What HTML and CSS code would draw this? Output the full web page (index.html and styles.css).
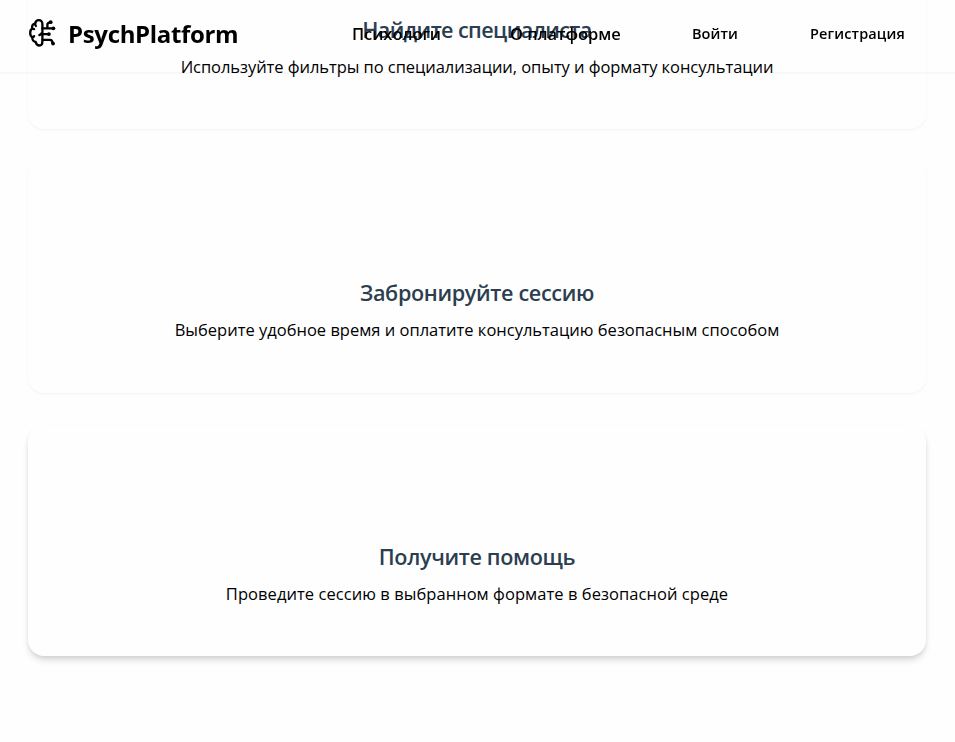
FILE: index.html
```html
<!DOCTYPE html>
<html lang="ru">
<head>
<meta charset="utf-8">
<title>PsychPlatform</title>
<link rel="stylesheet" href="styles.css">
</head>
<body>
<header class="header">
  <a class="brand">
    <svg class="logo" viewBox="0 0 28 30" fill="none" stroke="#000" stroke-width="2.3" stroke-linecap="round" stroke-linejoin="round">
      <path d="M13.4 6.2c0-2.5-1.4-4-3.5-4-2.3 0-3.5 1.5-3.7 3.5-2.4.2-3.7 2.1-2.9 4.6C1.8 11.4 1.2 13.1 1.2 15s.6 3.4 2.1 4.2c-.2 2.7 1 4.4 3.4 4.8.5 2.4 1.9 3.5 3.8 3.5 2.1 0 2.9-1.5 2.9-4z"/>
      <path d="M6.2 6c0 .9.2 1.5.7 2M3.3 10.3c.5.7 1.1.9 1.8.9M3.3 19c.8.2 1.4-.2 1.8-.9M10.4 17c1.1-.2 1.8-.9 2.2-1.8M13.4 10.3h10.4M18.4 10.3V6.8c0-1.5.9-2.3 2.3-2.5M12.5 16.1h7M13.4 21.8h7.6c1.7 0 2.6 1 2.6 3.7"/>
      <g fill="#000" stroke="none"><circle cx="21.7" cy="4.2" r="1.9"/><circle cx="24.4" cy="10.3" r="1.9"/><circle cx="19.9" cy="16.1" r="1.9"/><circle cx="24.1" cy="25.6" r="1.9"/></g>
    </svg>
    <span class="brand-name">PsychPlatform</span>
  </a>
  <nav class="nav"><a>Психологи</a><a>О платформе</a></nav>
  <div class="auth"><a class="login">Войти</a><a class="register">Регистрация</a></div>
</header>
<main class="steps">
  <section class="card find"><h3>Найдите специалиста</h3><p>Используйте фильтры по специализации, опыту и формату консультации</p></section>
  <section class="card book"><h3>Забронируйте сессию</h3><p>Выберите удобное время и оплатите консультацию безопасным способом</p></section>
  <section class="card help"><h3>Получите помощь</h3><p>Проведите сессию в выбранном формате в безопасной среде</p></section>
</main>
</body>
</html>
```
FILE: styles.css
```css
* { box-sizing: border-box; }
html, body { height: 100%; }
body {
  margin: 0;
  overflow: hidden;
  background: #fefefe;
  color: #000;
  font-family: "Open Sans", "Noto Sans", sans-serif;
}
.header {
  position: fixed;
  inset: 0 0 auto;
  z-index: 2;
  display: flex;
  align-items: center;
  height: 74px;
  padding: 0 50px 6px 28px;
  border-bottom: 2px solid rgba(0, 0, 0, .025);
  white-space: nowrap;
}
.brand { display: flex; align-items: center; width: 324px; }
.logo { width: 28px; height: 30px; margin: 0 11px 0 1px; }
.brand-name { font-size: 24px; font-weight: 700; letter-spacing: -.34px; }
.nav { display: flex; width: 340px; padding-top: 1px; font-size: 16.5px; font-weight: 600; letter-spacing: -.05px; }
.nav a { width: 158px; }
.auth { display: flex; font-size: 14.5px; font-weight: 600; }
.login { width: 118px; letter-spacing: .1px; }
.register { letter-spacing: .15px; }
.steps {
  display: grid;
  grid-auto-rows: 231.6px;
  gap: 32px;
  margin: -102.6px 29px 0 28px;
}
.card {
  padding: 115px 0 0;
  border-radius: 16px;
  background: #fefefe;
  box-shadow: 0 1px 3px rgba(0, 0, 0, .05);
  text-align: center;
  white-space: nowrap;
}
h3 { margin: 0; font-size: 21.6px; line-height: 34px; font-weight: 600; color: #2c3e50; letter-spacing: -.35px; }
p { margin: 4px 0 0; font-size: 16.5px; line-height: 32px; }
.find { padding-top: 116px; }
.find h3 { letter-spacing: -.6px; }
.find p { letter-spacing: -.06px; }
.help { box-shadow: 0 5px 7px -1px rgba(0, 0, 0, .14), 0 2px 4px -1px rgba(0, 0, 0, .08); }
.help p { letter-spacing: .055px; }
```
